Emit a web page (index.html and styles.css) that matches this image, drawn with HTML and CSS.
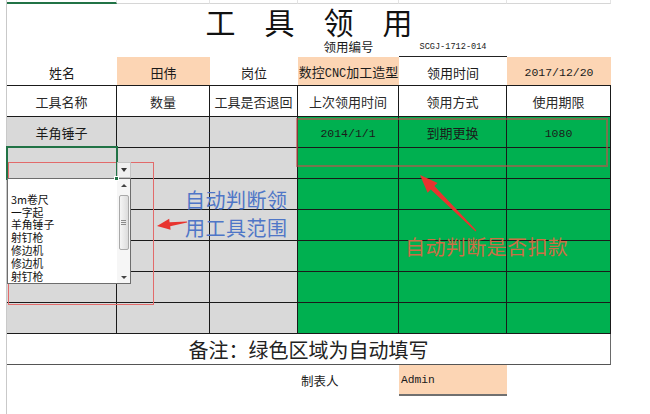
FILE: index.html
```html
<!DOCTYPE html>
<html lang="zh-CN">
<head>
<meta charset="utf-8">
<title>工具领用</title>
<link rel="stylesheet" href="styles.css">
</head>
<body>
<div class="page">
  <div class="sheet">
    <div class="grid">
      <div class="tick tick-active"></div><div class="tick"></div><div class="tick"></div><div class="tick"></div><div class="tick"></div><div class="tick"></div>

      <div class="title"><span>工</span><span>具</span><span>领</span><span>用</span></div>

      <div></div><div></div><div></div>
      <div class="cell sub">领用编号</div>
      <div class="cell code mono">SCGJ-1712-014</div>
      <div></div>

      <div class="cell info">姓名</div>
      <div class="cell info orange">田伟</div>
      <div class="cell info">岗位</div>
      <div class="mixed orange">数控<span class="latin">CNC</span>加工造型</div>
      <div class="cell info">领用时间</div>
      <div class="cell info orange num">2017/12/20</div>

      <div class="cell head">工具名称</div>
      <div class="cell head">数量</div>
      <div class="cell head">工具是否退回</div>
      <div class="cell head">上次领用时间</div>
      <div class="cell head">领用方式</div>
      <div class="cell head">使用期限</div>

      <div class="cell d gray">羊角锤子</div><div class="cell d gray"></div><div class="cell d gray"></div><div class="cell d green num">2014/1/1</div><div class="cell d green">到期更换</div><div class="cell d green num">1080</div>
      <div class="cell d gray"></div><div class="cell d gray"></div><div class="cell d gray"></div><div class="cell d green"></div><div class="cell d green"></div><div class="cell d green"></div>
      <div class="cell d gray"></div><div class="cell d gray"></div><div class="cell d gray"></div><div class="cell d green"></div><div class="cell d green"></div><div class="cell d green"></div>
      <div class="cell d gray"></div><div class="cell d gray"></div><div class="cell d gray"></div><div class="cell d green"></div><div class="cell d green"></div><div class="cell d green"></div>
      <div class="cell d gray"></div><div class="cell d gray"></div><div class="cell d gray"></div><div class="cell d green"></div><div class="cell d green"></div><div class="cell d green"></div>
      <div class="cell d gray"></div><div class="cell d gray"></div><div class="cell d gray"></div><div class="cell d green"></div><div class="cell d green"></div><div class="cell d green"></div>
      <div class="cell d gray"></div><div class="cell d gray"></div><div class="cell d gray"></div><div class="cell d green"></div><div class="cell d green"></div><div class="cell d green"></div>

      <div class="cell note">备注：绿色区域为自动填写</div>

      <div></div><div></div><div></div>
      <div class="cell maker">制表人</div>
      <div class="cell admin mono">Admin</div>
      <div></div>
    </div>
  </div>

  <div class="redbox"></div>
  <div class="brownbox"></div>
  <div class="sel"></div>
  <div class="ddbtn"><span class="tri-down"></span></div>
  <div class="ddlist">
    <div class="dditems">
      <div>&nbsp;</div>
      <div>3m卷尺</div>
      <div>一字起</div>
      <div>羊角锤子</div>
      <div>射钉枪</div>
      <div>修边机</div>
      <div>修边机</div>
      <div>射钉枪</div>
    </div>
    <div class="ddsb">
      <div class="sb-btn"><span class="tri-up-s"></span></div>
      <div class="sb-track"><div class="sb-thumb"><span class="grip"></span></div></div>
      <div class="sb-btn"><span class="tri-down-s"></span></div>
    </div>
  </div>
  <div class="handle"></div>

  <div class="ann ann-blue">自动判断领<br>用工具范围</div>
  <div class="ann ann-orange">自动判断是否扣款</div>

  <svg class="arrows" width="650" height="414" viewBox="0 0 650 414">
    <polygon points="157,226 169.2,218.8 169.6,222.3 186.9,221.5 187.1,222.5 170.2,226.3 170.6,229.8" fill="#e8342f"/>
    <polygon points="420,175 437.6,182.9 434.4,186 476.4,230.6 475.6,231.4 430.8,189.6 427.6,192.7" fill="#e8342f"/>
  </svg>
</div>
</body>
</html>
```

FILE: styles.css
```css
* {
  box-sizing: border-box;
  margin: 0;
  padding: 0;
}

html, body {
  margin: 0;
  background: #ffffff;
}

body {
  font-family: "Noto Sans CJK SC", "Noto Sans", sans-serif;
  color: #1b1b1b;
}

.page {
  position: relative;
  width: 650px;
  height: 414px;
  overflow: hidden;
}

.sheet {
  margin-left: 6px;
  border-left: 1px solid #c9c9c9;
  height: 414px;
}

.grid {
  display: grid;
  grid-template-columns: 110px 93px 88px 101px 108px 104px;
  grid-template-rows: 4px 34px 19px 28px 32px repeat(7, 31px) 31px 31px;
  width: 604px;
}

.tick {
  border-right: 1px solid #e4e4e4;
  border-bottom: 1px solid #d6d6d6;
}

.tick-active {
  border-bottom: 2px solid #217346;
}

.title {
  grid-column: 1 / -1;
  display: flex;
  justify-content: center;
  align-items: center;
  gap: 29px;
  font-size: 30px;
  line-height: 1;
  color: #111;
}

.cell {
  display: flex;
  align-items: center;
  justify-content: center;
  font-size: 13px;
  line-height: 1;
  white-space: nowrap;
}

.mixed {
  display: block;
  text-align: center;
  font-size: 13px;
  line-height: 28px;
  padding-top: 1px;
  white-space: nowrap;
  overflow: hidden;
}

.mono,
.num,
.latin {
  font-family: "Liberation Mono", "DejaVu Sans Mono", "Noto Sans CJK SC", monospace;
}

.latin {
  font-size: 12px;
}

.num {
  font-size: 11.5px;
}

.sub {
  font-size: 12.5px;
}

.code {
  font-size: 8.6px;
  border-bottom: 1px solid #222;
}

.info {
  padding-top: 2px;
}

.info.num {
  padding-top: 4px;
}

.orange {
  background: #fcd5b4;
}

.head {
  border-top: 1px solid #1a1a1a;
  border-right: 1px solid #1a1a1a;
  border-bottom: 1px solid #1a1a1a;
  color: #2a2a2a;
}

.d {
  border-right: 1px solid #1a1a1a;
  border-bottom: 1px solid #1a1a1a;
  padding-top: 1px;
}

.d.num {
  padding-top: 4px;
}

.gray {
  background: #d9d9d9;
}

.green {
  background: #00b050;
}

.note {
  grid-column: 1 / -1;
  font-size: 20px;
  border-right: 1px solid #6a6a6a;
  border-bottom: 1px solid #555;
  color: #222;
  padding-top: 1px;
}

.maker {
  justify-content: flex-start;
  padding-left: 3px;
  padding-top: 2px;
  font-size: 12.5px;
}

.admin {
  justify-content: flex-start;
  padding-left: 2px;
  padding-top: 3px;
  background: #fcd5b4;
  border-bottom: 2px solid #707070;
  font-size: 11.3px;
}

/* overlays */
.redbox {
  position: absolute;
  left: 8px;
  top: 162px;
  width: 146px;
  height: 143px;
  border: 1px solid #e26a6a;
}

.brownbox {
  position: absolute;
  left: 296px;
  top: 118px;
  width: 312px;
  height: 49px;
  border: 2px solid rgba(192, 80, 77, 0.62);
}

.sel {
  position: absolute;
  left: 6px;
  top: 146px;
  width: 112px;
  height: 34px;
  border: 2px solid #217346;
}

.handle {
  position: absolute;
  left: 114px;
  top: 176px;
  width: 5px;
  height: 5px;
  background: #217346;
  border: 1px solid #fff;
}

.ddbtn {
  position: absolute;
  left: 117px;
  top: 162px;
  width: 14px;
  height: 16px;
  background: #f0f0f0;
  border: 1px solid #c4c4c4;
  display: flex;
  align-items: center;
  justify-content: center;
}

.tri-down {
  width: 0;
  height: 0;
  border-left: 3.5px solid transparent;
  border-right: 3.5px solid transparent;
  border-top: 4px solid #333;
}

.ddlist {
  position: absolute;
  left: 7px;
  top: 178px;
  width: 124px;
  height: 106px;
  border: 1px solid #6d6d6d;
  background: #fff;
  display: flex;
}

.dditems {
  flex: 1;
  padding: 1px 0 0 3px;
  font-size: 10.8px;
  line-height: 12.8px;
  color: #111;
  white-space: nowrap;
}

.ddsb {
  width: 13px;
  display: flex;
  flex-direction: column;
  background: #f6f6f6;
}

.sb-btn {
  height: 12px;
  display: flex;
  align-items: center;
  justify-content: center;
}

.tri-up-s {
  width: 0;
  height: 0;
  border-left: 3px solid transparent;
  border-right: 3px solid transparent;
  border-bottom: 3px solid #444;
}

.tri-down-s {
  width: 0;
  height: 0;
  border-left: 3px solid transparent;
  border-right: 3px solid transparent;
  border-top: 3px solid #444;
}

.sb-track {
  flex: 1;
  padding-top: 4px;
  display: flex;
  justify-content: center;
  align-items: flex-start;
}

.sb-thumb {
  width: 10px;
  height: 55px;
  border: 1px solid #a9a9a9;
  border-radius: 2px;
  background: linear-gradient(to right, #f5f5f5, #dcdcdc);
  display: flex;
  align-items: center;
  justify-content: center;
}

.grip {
  width: 5px;
  height: 5px;
  background: repeating-linear-gradient(to bottom, #8a8a8a 0, #8a8a8a 1px, transparent 1px, transparent 2px);
}

.ann {
  position: absolute;
  font-size: 20px;
  line-height: 28px;
  white-space: nowrap;
}

.ann-blue {
  left: 185px;
  top: 186px;
  color: #4f76c7;
  letter-spacing: 0.5px;
}

.ann-orange {
  left: 405px;
  top: 233px;
  color: #cc6f45;
  letter-spacing: 0.4px;
}

.arrows {
  position: absolute;
  left: 0;
  top: 0;
  pointer-events: none;
}
```
